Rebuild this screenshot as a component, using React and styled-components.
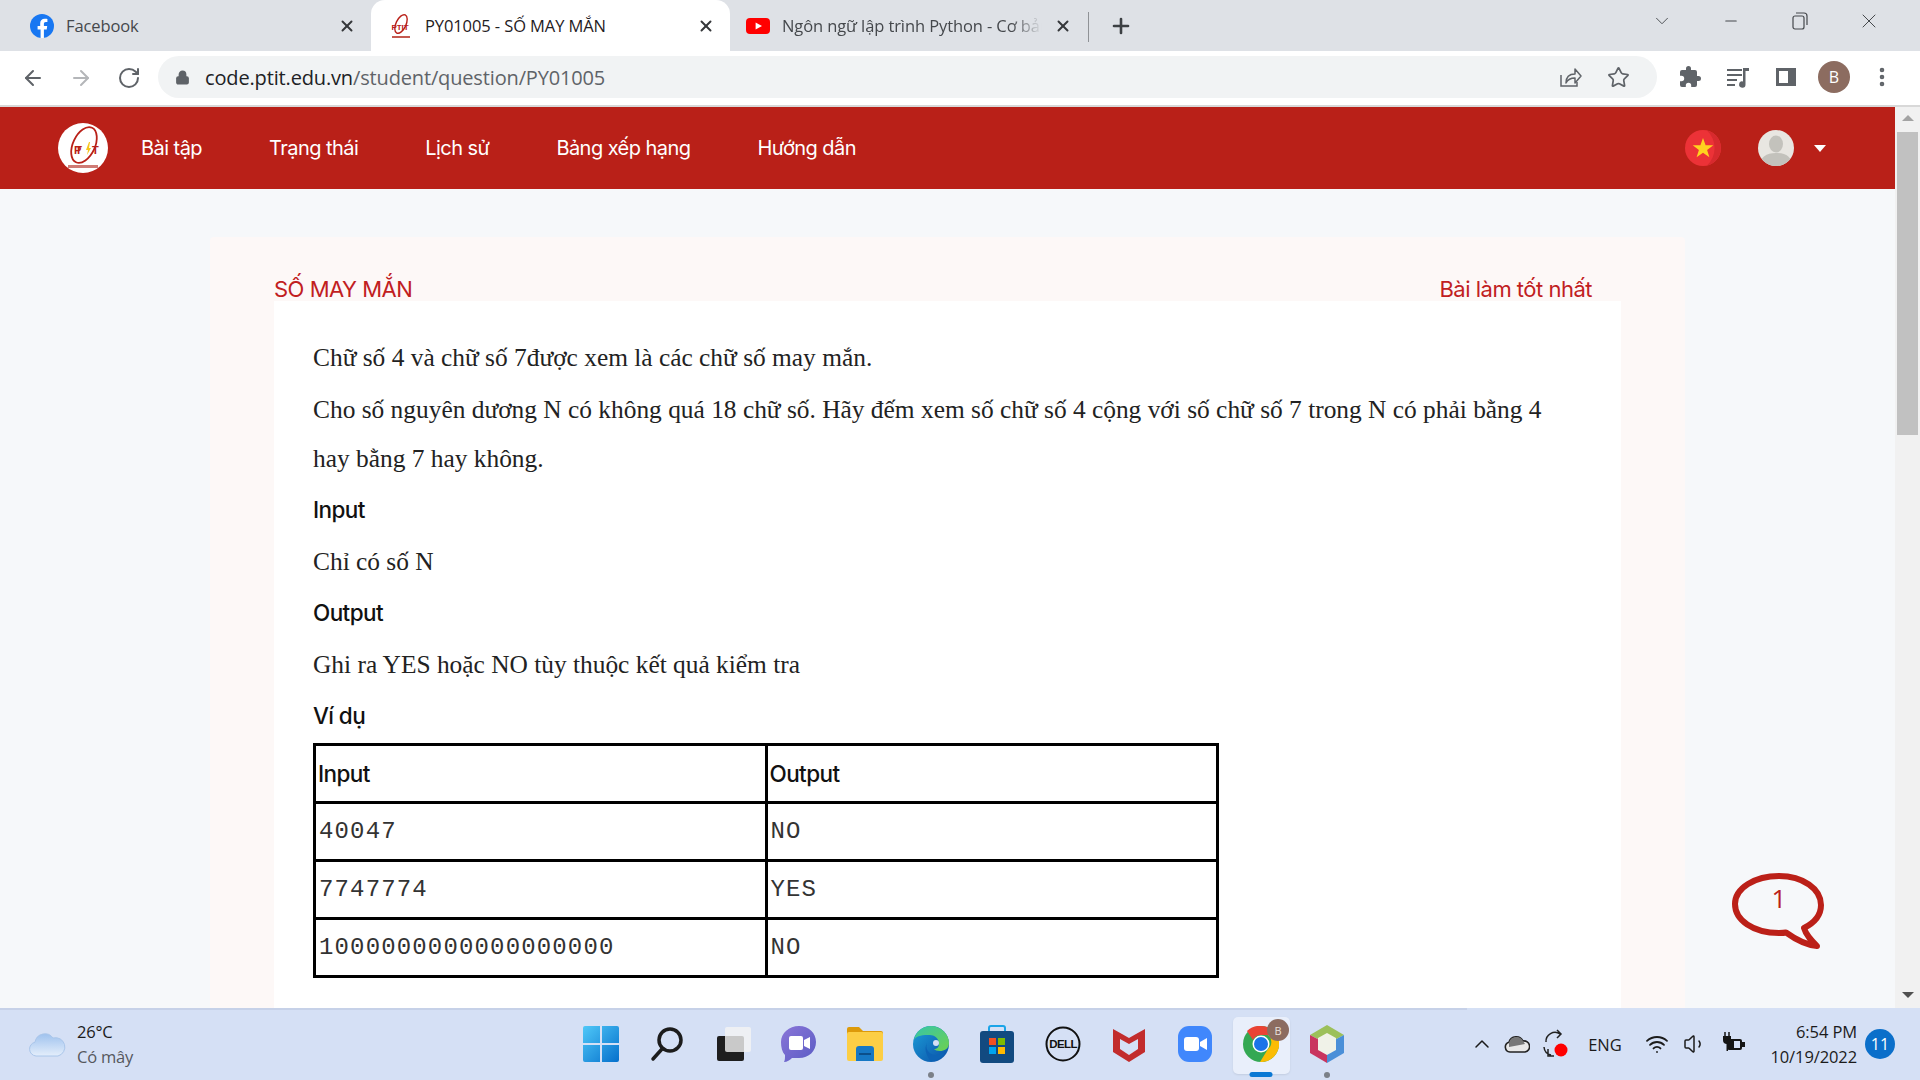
import React from "react";
import styled, { createGlobalStyle } from "styled-components";
import { ArrowLeft, ArrowRight, RotateCw, Lock, Star, X, Plus, ChevronDown, ChevronUp, Minus, EllipsisVertical, Wifi, Volume1 } from "lucide-react";

const Global = createGlobalStyle`
  html, body { margin: 0; padding: 0; width: 1920px; height: 1080px; overflow: hidden; background: #f6f8fa; }
  * { box-sizing: border-box; }
`;

const Screen = styled.div`
  width: 1920px; height: 1080px; display: flex; flex-direction: column; overflow: hidden;
  font-family: "Open Sans", "Noto Sans", sans-serif; position: relative;
`;

/* ---------- Tab strip ---------- */
const TabStrip = styled.div`
  height: 51px; flex: none; background: #dee1e6; display: flex; align-items: stretch; color: #3c4043;
`;
const Tab = styled.div`
  width: ${p => p.$w}px; flex: none; display: flex; align-items: center; padding-left: ${p => p.$pl}px; padding-right: ${p => p.$pr}px;
  gap: ${p => p.$gap}px; font-size: 16.5px; letter-spacing: -0.1px; color: ${p => p.$active ? "#1f2023" : "#45484c"};
  background: ${p => p.$active ? "#fff" : "transparent"}; border-radius: 14px 14px 0 0; position: relative;
`;
const TabTitle = styled.span`
  flex: 1; min-width: 0; white-space: nowrap; overflow: hidden;
  ${p => p.$fade && "mask-image: linear-gradient(to right, #000 88%, transparent 100%);"}
`;
const TabClose = styled.span`display: flex; color: #35373a; flex: none;`;
const TabDivider = styled.div`width: 1px; height: 30px; background: #8f9296; align-self: center; flex: none; margin-top: 3px;`;
const NewTab = styled.div`display: flex; align-items: center; margin-left: 20px; color: #3c4043; flex: 1;`;
const WindowButtons = styled.div`display: flex; align-items: flex-start; margin-left: auto; padding-top: 9px; padding-right: 17px; gap: 0; color: #45484c;`;
const WinBtn = styled.span`width: 69px; height: 24px; display: flex; align-items: center; justify-content: center;`;

/* ---------- Toolbar ---------- */
const Toolbar = styled.div`
  height: 56px; flex: none; background: #fff; border-bottom: 2px solid #d8d8d8; display: flex; align-items: center; padding-left: 21px; padding-right: 21px;
`;
const NavIcon = styled.span`width: 48px; flex: none; display: flex; color: ${p => p.$off ? "#b4b6b9" : "#5f6368"};`;
const Omnibox = styled.div`
  margin-left: -7px; width: 1499px; height: 42px; flex: none; border-radius: 21px; background: #f1f3f4; display: flex; align-items: center; padding-left: 17px; padding-right: 15px;
  margin-top: -2px;
`;
const Url = styled.div`
  font-size: 20px; letter-spacing: -0.15px; margin-left: 15px; flex: 1; color: #5f6368; white-space: nowrap; b { font-weight: 400; color: #202124; }
`;
const OmniIcon = styled.span`display: flex; width: 48px; justify-content: center; color: #5f6368;`;
const ToolIcons = styled.div`display: flex; align-items: center; margin-top: -2px; margin-left: 9px;`;
const ToolIcon = styled.span`width: 48px; display: flex; justify-content: center; color: #5f6368;`;
const Avatar = styled.span`
  width: 32px; height: 32px; border-radius: 50%; background: #8c6c60; color: #fff; font-size: 16px; display: flex; align-items: center; justify-content: center;
`;

/* ---------- Page ---------- */
const Body = styled.div`flex: 1; min-height: 0; display: flex;`;
const PageCol = styled.div`flex: 1; min-width: 0; display: flex; flex-direction: column; overflow: hidden; background: #f6f8fa;`;
const NavBar = styled.nav`
  height: 82px; flex: none; background: #b92018; display: flex; align-items: center; padding-left: 58px; padding-right: 69px; color: #fff;
`;
const LogoWrap = styled.span`width: 50px; height: 50px; display: flex; margin-right: 33px; flex: none;`;
const NavLinks = styled.div`display: flex; gap: 67px; flex: 1;`;
const NavLink = styled.a`
  font-family: Inter, "Noto Sans", sans-serif; font-size: 20px; letter-spacing: -0.55px; color: #fff; white-space: nowrap;
`;
const NavRight = styled.div`display: flex; align-items: center;`;
const Round = styled.span`width: 36px; height: 36px; display: flex; flex: none;`;
const Caret = styled.span`
  width: 0; height: 0; border-left: 6.5px solid transparent; border-right: 6.5px solid transparent; border-top: 7px solid #fff; margin-left: 20px;
`;
const Gap = styled.span`width: 37px;`;

const Content = styled.main`flex: 1; min-height: 0; overflow: hidden; position: relative;`;
const Card = styled.section`
  width: 1475px; margin: 48px auto 0; background: #fdf8f7; padding: 41px 64px 0; border-radius: 4px 4px 0 0; height: 900px;
`;
const TitleRow = styled.div`
  height: 23px; display: flex; justify-content: space-between; align-items: center; padding-right: 29px;
  font-family: Inter, "Noto Sans", sans-serif; font-size: 22px; letter-spacing: -0.5px; color: #c1201f; white-space: nowrap; line-height: 23px;
`;
const Panel = styled.div`
  background: #fff; padding: 32px 39px 0; height: 800px; color: #1d1d1d;
`;
const Para = styled.p`
  margin: 0 0 2.5px; font-family: "Liberation Serif", "Times New Roman", serif; font-size: 25.4px; line-height: 49px; color: #222;
`;
const Heading = styled.h4`
  margin: 0 0 2.5px; font-family: Inter, "Noto Sans", sans-serif; font-weight: 500; font-size: 22.5px; letter-spacing: -0.6px; line-height: 49px; color: #111;
`;
const Sample = styled.table`
  margin-top: 3px; width: 906px; border-collapse: collapse; border: 3px solid #000; table-layout: fixed;
`;
const Th = styled.th`
  border: 3px solid #000; height: 58px; padding: 0 2px; text-align: left; font-family: Inter, "Noto Sans", sans-serif; font-weight: 500; font-size: 22.5px; letter-spacing: -0.6px; color: #111;
`;
const Td = styled.td`
  border: 3px solid #000; height: 58px; padding: 0 3px; font-family: "Liberation Mono", "Courier New", monospace; font-size: 24px; letter-spacing: 1.15px; color: #333;
`;
const Bubble = styled.div`position: absolute; left: 1729px; top: 684px; width: 100px; height: 84px;`;

const ScrollTrack = styled.div`
  width: 25px; flex: none; background: #f1f1f1; display: flex; flex-direction: column; align-items: center; padding-top: 8px; position: relative;
`;
const Arrow = styled.span`
  width: 0; height: 0; border-left: 6px solid transparent; border-right: 6px solid transparent;
  ${p => p.$down ? "border-top: 6px solid #505050; position: absolute; bottom: 10px;" : "border-bottom: 6px solid #a3a3a3;"}
`;
const Thumb = styled.div`width: 21px; height: 303px; background: #c1c1c1; margin-top: 11px;`;

/* ---------- Taskbar ---------- */
const Taskbar = styled.footer`
  height: 72px; flex: none; background: #d5e0f5; display: grid; grid-template-columns: 1fr 792px 1fr; align-items: center; position: relative;
  &::before { content: ""; position: absolute; left: 0; top: 0; width: 1467px; height: 2px; background: #c6d1e8; }
`;
const Weather = styled.div`display: flex; align-items: center; padding-left: 28px; gap: 11px;`;
const WeatherText = styled.div`font-size: 16.5px; line-height: 25px; color: #1b1b1b; letter-spacing: -0.2px; span { color: #55585d; display: block; }`;
const Dock = styled.div`display: flex; align-items: stretch; height: 72px; margin-left: 4px;`;
const DockItem = styled.div`
  width: 66px; flex: none; position: relative; display: flex; align-items: center; justify-content: center;
  ${p => p.$active && `&::before { content: ""; position: absolute; left: 5px; right: 4px; top: 9px; bottom: 6px; background: #e9effb; border-radius: 5px; box-shadow: 0 1px 2px #c3cde0; }`}
  svg { position: relative; }
`;
const DockDot = styled.span`
  position: absolute; left: 50%; transform: translateX(-50%); bottom: 3px; border-radius: 3px;
  width: ${p => p.$bar ? 23 : 6}px; height: 5px; background: ${p => p.$bar ? "#0a78d4" : "#7b8088"}; ${p => !p.$bar && "height: 6px; bottom: 2px;"}
`;
const Badge = styled.span`
  position: absolute; top: 11px; left: 39px; width: 22px; height: 22px; border-radius: 50%; background: #8c6c60; color: #e8e0dc; font-size: 11px; display: flex; align-items: center; justify-content: center;
`;
const Tray = styled.div`display: flex; align-items: center; justify-content: flex-end; padding-right: 25px; color: #1b1b1b;`;
const TraySlot = styled.span`width: ${p => p.$w}px; flex: none; display: flex; justify-content: center; align-items: center; font-size: 16.5px;`;
const Clock = styled.div`width: 103px; flex: none; text-align: right; font-size: 16.5px; line-height: 25px; letter-spacing: -0.1px; white-space: nowrap;`;
const Notify = styled.span`
  width: 30px; height: 30px; border-radius: 50%; background: #0b6fca; color: #fff; margin-left: 8px; font-size: 16px; display: flex; align-items: center; justify-content: center; flex: none;
`;

/* ---------- Drawings ---------- */
const Facebook = () => (
  <svg width="24" height="24" viewBox="0 0 24 24"><circle cx="12" cy="12" r="12" fill="#1877f2"/><path d="M16.7 15.5l.5-3.5h-3.3V9.8c0-1 .5-1.9 2-1.9h1.5v-3s-1.4-.2-2.7-.2c-2.7 0-4.5 1.6-4.5 4.6V12H7.6v3.5h3v8.4c1.2.2 2.4.2 3.3 0v-8.4z" fill="#fff"/></svg>
);
const PtitSmall = () => (
  <svg width="22" height="26" viewBox="0 0 22 26"><ellipse cx="11" cy="11" rx="5" ry="10" transform="rotate(25 11 11)" fill="none" stroke="#b92018" strokeWidth="1.4"/><text x="1.5" y="17" fontSize="8" fontFamily="Liberation Sans" fontWeight="700" fill="#b92018">PTIT</text><rect x="2" y="23" width="18" height="2" fill="#c45a50"/></svg>
);
const YouTube = () => (
  <svg width="24" height="24" viewBox="0 0 24 24"><rect y="4" width="24" height="16" rx="4" fill="#f00"/><path d="M9.6 8.4l6.4 3.6-6.4 3.6z" fill="#fff"/></svg>
);
const Logo = () => (
  <svg width="50" height="50" viewBox="0 0 50 50">
    <circle cx="25" cy="25" r="25" fill="#fff"/>
    <ellipse cx="26" cy="22" rx="11" ry="19" transform="rotate(25 26 22)" fill="none" stroke="#b92018" strokeWidth="1.8"/>
    <text x="16" y="31" fontSize="11" fontFamily="Liberation Sans" fontWeight="700" fill="#b92018" textLength="8">PT</text>
    <path d="M31 19l-3 8h2l-1 5 4-7h-2l1-6z" fill="#f7c51c"/>
    <text x="34" y="31" fontSize="11" fontFamily="Liberation Sans" fontWeight="700" fill="#b92018">T</text>
    <rect x="10" y="42" width="30" height="3" fill="#cf7b75"/>
  </svg>
);
const Share = () => (
  <svg width="24" height="24" viewBox="0 0 24 24" fill="none" stroke="#5f6368" strokeWidth="1.5"><path d="M3 10v11h16v-4"/><path d="M8 18c0-6 3-9 9-9V4l6 7-6 7v-5c-4 0-7 1-9 5z" strokeLinejoin="round"/></svg>
);
const Puzzle = () => (
  <svg width="24" height="24" viewBox="0 0 24 24" fill="#5f6368"><path d="M20.5 11H19V7a2 2 0 0 0-2-2h-4V3.5a2.5 2.5 0 0 0-5 0V5H4a2 2 0 0 0-2 2v3.8h1.5a2.7 2.7 0 0 1 0 5.4H2V20a2 2 0 0 0 2 2h3.8v-1.5a2.7 2.7 0 0 1 5.4 0V22H17a2 2 0 0 0 2-2v-4h1.5a2.5 2.5 0 0 0 0-5z"/></svg>
);
const Media = () => (
  <svg width="24" height="24" viewBox="0 0 24 24" fill="#5f6368"><rect x="1" y="4" width="15" height="2"/><rect x="1" y="9" width="15" height="2"/><rect x="1" y="14" width="10" height="2"/><rect x="1" y="19" width="8" height="2"/><path d="M17 3h6v3h-3.5v13.5a3.2 3.2 0 1 1-2.5-3.1z"/></svg>
);
const SidePanel = () => (
  <svg width="22" height="22" viewBox="0 0 22 22"><path d="M1 2h20v18H1z" fill="#5f6368"/><rect x="4" y="5" width="9" height="12" fill="#fff"/></svg>
);
const Restore = () => (
  <svg width="18" height="20" viewBox="0 0 18 20" fill="none" stroke="#45484c" strokeWidth="1.2"><rect x="2" y="5" width="11" height="13" rx="2"/><path d="M5 2h8a3 3 0 0 1 3 3v9"/></svg>
);
const Flag = () => (
  <svg width="36" height="36" viewBox="0 0 36 36"><circle cx="18" cy="18" r="18" fill="#ec3237"/><path d="M22 .5A18 18 0 0 1 22 35.5 24 24 0 0 0 22 .5z" fill="#d72a2e"/><path d="M18 8l2.6 7.3h7.7l-6.2 4.6 2.3 7.4-6.4-4.5-6.4 4.5 2.3-7.4-6.2-4.6h7.7z" fill="#ffd21f"/></svg>
);
const UserPic = () => (
  <svg width="36" height="36" viewBox="0 0 36 36"><clipPath id="u"><circle cx="18" cy="18" r="18"/></clipPath><g clipPath="url(#u)"><rect width="36" height="36" fill="#e8e6e1"/><ellipse cx="18" cy="14" rx="7" ry="8.5" fill="#c3c2bc"/><path d="M2 36c0-9 6-13 16-13s16 4 16 13z" fill="#c3c2bc"/></g></svg>
);
const SpeechBubble = () => (
  <svg width="100" height="84" viewBox="0 0 100 84">
    <path d="M75 55c10-5 17-13 17-23C92 16 74 3 50 3S6 15 6 31s18 29 44 29c3 0 5 0 7-.5C66 66 78 72 88 73 82 67 77 62 75 55z" fill="none" stroke="#bb2018" strokeWidth="6" strokeLinejoin="round"/>
    <text x="50" y="35" textAnchor="middle" fontFamily="Open Sans" fontSize="26" fill="#bb2018">1</text>
  </svg>
);
const Cloud = () => (
  <svg width="38" height="28" viewBox="0 0 38 28"><defs><linearGradient id="cl" x1="0" x2="0" y1="0" y2="1"><stop offset="0" stopColor="#9fc2ee"/><stop offset="1" stopColor="#e4eefb"/></linearGradient></defs><path d="M8 26a7 7 0 0 1-1-13.800A10 10 0 0 1 25 8a8.500 8.500 0 0 1 5 18z" fill="url(#cl)" stroke="#aac6ea"/></svg>
);
const WinLogo = () => (
  <svg width="36" height="36" viewBox="0 0 36 36"><defs><linearGradient id="w" x1="0" y1="0" x2="1" y2="1"><stop offset="0" stopColor="#4fc8f8"/><stop offset="1" stopColor="#0570cc"/></linearGradient></defs><path d="M0 2a2 2 0 0 1 2-2h15v17H0zM19 0h15a2 2 0 0 1 2 2v15H19zM0 19h17v17H2a2 2 0 0 1-2-2zM19 19h17v15a2 2 0 0 1-2 2H19z" fill="url(#w)"/></svg>
);
const SearchI = () => (
  <svg width="36" height="36" viewBox="0 0 36 36" fill="none" stroke="#1c1c1c" strokeWidth="3.500"><circle cx="21" cy="14" r="11"/><path d="M13 23L4 33" strokeLinecap="round"/></svg>
);
const TaskView = () => (
  <svg width="36" height="36" viewBox="0 0 36 36"><rect x="2" y="10" width="27" height="25" rx="2" fill="#1e1e1e"/><rect x="10" y="1" width="26" height="25" rx="2" fill="#f4f4f4" fillOpacity=".8"/></svg>
);
const Chat = () => (
  <svg width="36" height="38" viewBox="0 0 36 38"><defs><linearGradient id="ch" x1="0" y1="0" x2="1" y2="1"><stop offset="0" stopColor="#8a75d8"/><stop offset="1" stopColor="#5a5cc4"/></linearGradient></defs><path d="M18 1c10 0 17 7 17 16s-7 16-17 16c-3 0-5 0-7 0-2 2-5 4-8 4 1-2 1-4 1-7C1 27 0 22 0 17 0 8 8 1 18 1z" fill="url(#ch)"/><rect x="8" y="11" width="14" height="14" rx="2" fill="#fff"/><path d="M23 15l6-3v12l-6-3z" fill="#fff"/></svg>
);
const Folder = () => (
  <svg width="36" height="34" viewBox="0 0 36 34"><path d="M0 2a2 2 0 0 1 2-2h10l4 4h18a2 2 0 0 1 2 2v4H0z" fill="#dd9a0a"/><rect y="5" width="36" height="29" rx="2" fill="#fcce45"/><path d="M9 22a3 3 0 0 1 3-3h12a3 3 0 0 1 3 3v12H9z" fill="#1678c4"/><rect x="12" y="26" width="12" height="2" fill="#0b4f8a"/></svg>
);
const Edge = () => (
  <svg width="36" height="36" viewBox="0 0 36 36"><defs><linearGradient id="e1" x1="0" y1="0" x2="1" y2="1"><stop offset="0" stopColor="#36c5a9"/><stop offset="1" stopColor="#6ed14f"/></linearGradient><linearGradient id="e2" x1="0" y1="0" x2="1" y2="1"><stop offset="0" stopColor="#1c9fd8"/><stop offset="1" stopColor="#0a4fa8"/></linearGradient></defs><circle cx="18" cy="18" r="18" fill="url(#e2)"/><path d="M1 14C3 5 10 0 18 0c10 0 18 8 18 17 0 6-5 8-9 8-3 0-5-1-6-2 3 0 5-2 5-5 0-6-5-9-9-9C10 9 4 9 1 14z" fill="url(#e1)"/><path d="M14 17c-2 5 1 11 8 12 4 0 7-1 10-3-3 6-8 9-14 9-3-3-8-11-4-18z" fill="#0d63b5"/><circle cx="23" cy="17" r="3" fill="#d5e0f5"/></svg>
);
const Store = () => (
  <svg width="34" height="38" viewBox="0 0 34 38"><path d="M9 7V3a2 2 0 0 1 2-2h12a2 2 0 0 1 2 2v4" fill="none" stroke="#1aa4e8" strokeWidth="2"/><rect y="6" width="34" height="32" rx="3" fill="#124a80"/><rect x="9" y="13" width="7" height="7" fill="#f25022"/><rect x="18" y="13" width="7" height="7" fill="#7fba00"/><rect x="9" y="22" width="7" height="7" fill="#00a4ef"/><rect x="18" y="22" width="7" height="7" fill="#ffb900"/></svg>
);
const Dell = () => (
  <svg width="36" height="36" viewBox="0 0 36 36"><circle cx="18" cy="18" r="16.500" fill="none" stroke="#111" strokeWidth="2"/><text x="18" y="22" textAnchor="middle" fontSize="11.500" fontFamily="Liberation Sans" fontWeight="700" letterSpacing="-.6" fill="#111">DELL</text></svg>
);
const McAfee = () => (
  <svg width="32" height="36" viewBox="0 0 32 36"><path d="M0 3l9 5 7 4 7-4 9-5v23L16 36 0 26z" fill="#c22c2c"/><path d="M7 13l9 5 9-5v10l-9 6-9-6z" fill="#d5e0f5"/></svg>
);
const ZoomI = () => (
  <svg width="34" height="36" viewBox="0 0 34 36"><rect width="34" height="36" rx="11" fill="#4087fc"/><rect x="6" y="11" width="15" height="14" rx="3" fill="#fff"/><path d="M22 16l7-4v12l-7-4z" fill="#fff"/></svg>
);
const Chrome = () => (
  <svg width="36" height="36" viewBox="0 0 36 36"><circle cx="18" cy="18" r="18" fill="#34a853"/><path d="M18 0a18 18 0 0 1 15.600 9H18a9 9 0 0 0-8 5L4 5a18 18 0 0 1 14-5z" fill="#ea4335"/><path d="M33.600 9A18 18 0 0 1 17 36l8-13a9 9 0 0 0 0-14z" fill="#fbbc04"/><circle cx="18" cy="18" r="8.500" fill="#fff"/><circle cx="18" cy="18" r="7" fill="#1a73e8"/></svg>
);
const Hex = () => (
  <svg width="34" height="38" viewBox="0 0 34 38"><path d="M17 0l17 10L17 19 0 10z" fill="#9cc05a"/><path d="M0 10l17 9v19L0 28z" fill="#c9355f"/><path d="M34 10L17 19v19l17-10z" fill="#4a8fd8"/><path d="M17 8l9 5v12l-9 5-9-5V13z" fill="#f0f2e8"/></svg>
);
const OneDrive = () => (
  <svg width="26" height="22" viewBox="0 0 26 22"><path d="M6 19a5 5 0 0 1-1-9.800A7.500 7.500 0 0 1 19 8a5.500 5.500 0 0 1 2 11z" fill="#e8e8e8" stroke="#222" strokeWidth="1.600"/><path d="M5 10a7.500 7.500 0 0 1 14-2l2 3-16 3z" fill="#777"/></svg>
);
const Sync = () => (
  <svg width="26" height="30" viewBox="0 0 26 30" fill="none" stroke="#222" strokeWidth="1.500"><path d="M4 13A9 9 0 0 1 18 5M15 1l4 4-4 4"/><path d="M2 18a9 9 0 0 0 7 8M6 20v7h6"/><circle cx="19" cy="21" r="6.500" fill="#f00" stroke="none"/></svg>
);
const Battery = () => (
  <svg width="26" height="26" viewBox="0 0 26 26" fill="#151515"><path d="M5 1v4M9 1v4" stroke="#151515" strokeWidth="1.500"/><path d="M3 5h8v4a4 4 0 0 1-8 0z"/><path d="M6.500 12h1.500v8H6.500z"/><rect x="7" y="8" width="15" height="11" rx="2"/><rect x="22" y="11" width="3" height="5"/><rect x="14" y="10" width="6" height="7" fill="#d5e0f5"/></svg>
);

const App = () => (
  <Screen>
    <Global />
    <TabStrip>
      <Tab $w={371} $pl={30} $pr={15} $gap={12}><Facebook /><TabTitle>Facebook</TabTitle><TabClose><X size={18} strokeWidth={2.6} /></TabClose></Tab>
      <Tab $w={359} $active $pl={19} $pr={15} $gap={13}><PtitSmall /><TabTitle>PY01005 - SỐ MAY MẮN</TabTitle><TabClose><X size={18} strokeWidth={2.6} /></TabClose></Tab>
      <Tab $w={358} $pl={16} $pr={16} $gap={12}><YouTube /><TabTitle $fade>Ngôn ngữ lập trình Python - Cơ bản</TabTitle><TabClose><X size={18} strokeWidth={2.6} /></TabClose></Tab>
      <TabDivider />
      <NewTab><Plus size={24} strokeWidth={2.6} /></NewTab>
      <WindowButtons>
        <WinBtn><ChevronDown size={22} strokeWidth={1} /></WinBtn>
        <WinBtn><Minus size={18} strokeWidth={1.4} /></WinBtn>
        <WinBtn><Restore /></WinBtn>
        <WinBtn><X size={24} strokeWidth={1} /></WinBtn>
      </WindowButtons>
    </TabStrip>
    <Toolbar>
      <NavIcon><ArrowLeft size={24} strokeWidth={2} /></NavIcon>
      <NavIcon $off><ArrowRight size={24} strokeWidth={2} /></NavIcon>
      <NavIcon><RotateCw size={24} strokeWidth={2} /></NavIcon>
      <Omnibox>
        <Lock size={15} fill="#5f6368" color="#5f6368" strokeWidth={2.4} />
        <Url><b>code.ptit.edu.vn</b>/student/question/PY01005</Url>
        <OmniIcon><Share /></OmniIcon>
        <OmniIcon><Star size={23} strokeWidth={1.8} /></OmniIcon>
      </Omnibox>
      <ToolIcons>
        <ToolIcon><Puzzle /></ToolIcon>
        <ToolIcon><Media /></ToolIcon>
        <ToolIcon><SidePanel /></ToolIcon>
        <ToolIcon><Avatar>B</Avatar></ToolIcon>
        <ToolIcon><EllipsisVertical size={24} strokeWidth={2.6} /></ToolIcon>
      </ToolIcons>
    </Toolbar>
    <Body>
      <PageCol>
        <NavBar>
          <LogoWrap><Logo /></LogoWrap>
          <NavLinks>
            <NavLink>Bài tập</NavLink>
            <NavLink>Trạng thái</NavLink>
            <NavLink>Lịch sử</NavLink>
            <NavLink>Bảng xếp hạng</NavLink>
            <NavLink>Hướng dẫn</NavLink>
          </NavLinks>
          <NavRight>
            <Round><Flag /></Round>
            <Gap />
            <Round><UserPic /></Round>
            <Caret />
          </NavRight>
        </NavBar>
        <Content>
          <Card>
            <TitleRow><span>SỐ MAY MẮN</span><span>Bài làm tốt nhất</span></TitleRow>
            <Panel>
              <Para>Chữ số 4 và chữ số 7được xem là các chữ số may mắn.</Para>
              <Para>Cho số nguyên dương N có không quá 18 chữ số. Hãy đếm xem số chữ số 4 cộng với số chữ số 7 trong N có phải bằng 4 hay bằng 7 hay không.</Para>
              <Heading>Input</Heading>
              <Para>Chỉ có số N</Para>
              <Heading>Output</Heading>
              <Para>Ghi ra YES hoặc NO tùy thuộc kết quả kiểm tra</Para>
              <Heading>Ví dụ</Heading>
              <Sample>
                <thead><tr><Th>Input</Th><Th>Output</Th></tr></thead>
                <tbody>
                  <tr><Td>40047</Td><Td>NO</Td></tr>
                  <tr><Td>7747774</Td><Td>YES</Td></tr>
                  <tr><Td>1000000000000000000</Td><Td>NO</Td></tr>
                </tbody>
              </Sample>
            </Panel>
          </Card>
          <Bubble><SpeechBubble /></Bubble>
        </Content>
      </PageCol>
      <ScrollTrack><Arrow /><Thumb /><Arrow $down /></ScrollTrack>
    </Body>
    <Taskbar>
      <Weather><Cloud /><WeatherText>26°C<span>Có mây</span></WeatherText></Weather>
      <Dock>
        <DockItem><WinLogo /></DockItem>
        <DockItem><SearchI /></DockItem>
        <DockItem><TaskView /></DockItem>
        <DockItem><Chat /></DockItem>
        <DockItem><Folder /></DockItem>
        <DockItem><Edge /><DockDot /></DockItem>
        <DockItem><Store /></DockItem>
        <DockItem><Dell /></DockItem>
        <DockItem><McAfee /></DockItem>
        <DockItem><ZoomI /></DockItem>
        <DockItem $active><Chrome /><Badge>B</Badge><DockDot $bar /></DockItem>
        <DockItem><Hex /><DockDot /></DockItem>
      </Dock>
      <Tray>
        <TraySlot $w={34}><ChevronUp size={24} strokeWidth={1.5} /></TraySlot>
        <TraySlot $w={36}><OneDrive /></TraySlot>
        <TraySlot $w={40}><Sync /></TraySlot>
        <TraySlot $w={60}>ENG</TraySlot>
        <TraySlot $w={43}><Wifi size={24} strokeWidth={1.8} /></TraySlot>
        <TraySlot $w={34}><Volume1 size={24} strokeWidth={1.5} /></TraySlot>
        <TraySlot $w={42}><Battery /></TraySlot>
        <Clock>6:54 PM<br />10/19/2022</Clock>
        <Notify>11</Notify>
      </Tray>
    </Taskbar>
  </Screen>
);

export default App;
